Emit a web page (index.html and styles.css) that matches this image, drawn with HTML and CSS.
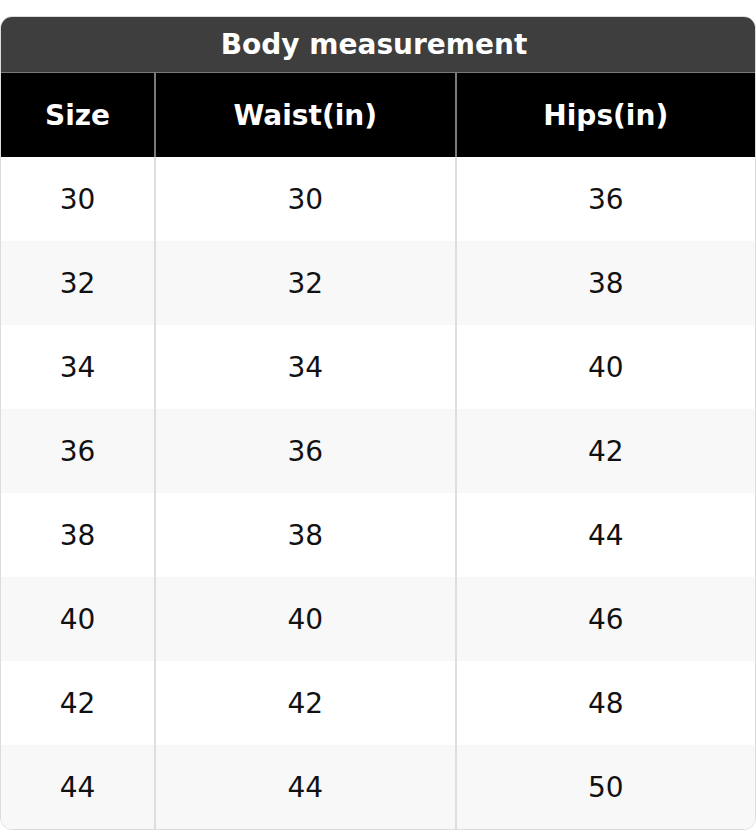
FILE: index.html
```html
<!DOCTYPE html>
<html>
<head>
<meta charset="utf-8">
<link rel="stylesheet" href="styles.css">
</head>
<body>
<div class="page">
  <div class="card">
    <div class="title">Body measurement</div>
    <div class="grid">
      <div class="th">Size</div><div class="th div">Waist(in)</div><div class="th div">Hips(in)</div>
      <div class="td">30</div><div class="td div">30</div><div class="td div">36</div>
      <div class="td alt">32</div><div class="td div alt">32</div><div class="td div alt">38</div>
      <div class="td">34</div><div class="td div">34</div><div class="td div">40</div>
      <div class="td alt">36</div><div class="td div alt">36</div><div class="td div alt">42</div>
      <div class="td">38</div><div class="td div">38</div><div class="td div">44</div>
      <div class="td alt">40</div><div class="td div alt">40</div><div class="td div alt">46</div>
      <div class="td">42</div><div class="td div">42</div><div class="td div">48</div>
      <div class="td alt">44</div><div class="td div alt">44</div><div class="td div alt">50</div>
    </div>
  </div>
</div>
</body>
</html>
```
FILE: styles.css
```css
html, body {
  margin: 0;
  padding: 0;
  background: #ffffff;
}
.page {
  padding-top: 16px;
  font-family: "DejaVu Sans", "Liberation Sans", sans-serif;
}
.card {
  width: 756px;
  box-sizing: border-box;
  border: 1px solid #dcdcdc;
  border-radius: 12px;
  overflow: hidden;
  background: #ffffff;
}
.title {
  height: 55px;
  padding-right: 8px;
  background: #3e3e3e;
  color: #ffffff;
  font-weight: bold;
  font-size: 28px;
  display: flex;
  align-items: center;
  justify-content: center;
  border-bottom: 1px solid #7a7a7a;
}
.grid {
  display: grid;
  grid-template-columns: 153px 1fr 1fr;
  grid-auto-rows: 84px;
}
.th {
  background: #000000;
  color: #ffffff;
  font-weight: bold;
  font-size: 28px;
  display: flex;
  align-items: center;
  justify-content: center;
}
.th.div {
  border-left: 2px solid #7a7a7a;
}
.td {
  background: #ffffff;
  color: #111111;
  font-size: 28px;
  display: flex;
  align-items: center;
  justify-content: center;
}
.td.alt {
  background: #f8f8f8;
}
.td.div {
  border-left: 2px solid #dedede;
}
```
